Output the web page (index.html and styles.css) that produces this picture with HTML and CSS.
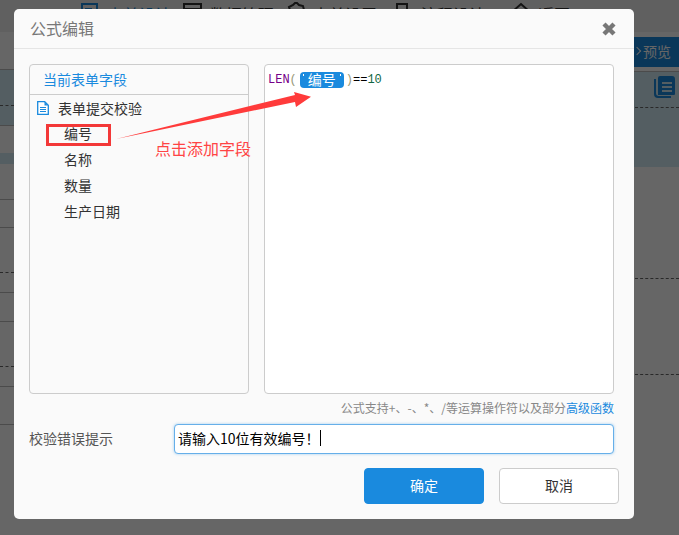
FILE: index.html
```html
<!DOCTYPE html>
<html lang="zh-CN">

<head>
    <meta charset="UTF-8" />
    <title>公式编辑</title>
    <link rel="stylesheet" href="styles.css">
</head>

<body>
    <div class="page">
        <div class="nav">
            <div class="nav-item nav-active">
                <svg width="20" height="20" viewBox="0 0 20 20"><path d="M17 8V2H2v15h7M5 7h7M5 11h4M11 14l6-7 2 2-6 7h-2z" /></svg>
                <span>表单设计</span>
            </div>
            <div class="nav-item nav-w2">
                <svg width="20" height="20" viewBox="0 0 20 20"><path d="M1 2h17v16H1zM1 7h17" /></svg>
                <span>数据管理</span>
            </div>
            <div class="nav-item nav-w3">
                <svg width="20" height="20" viewBox="0 0 20 20"><path d="M7 3l2-2h2l2 2 4 1 1 4-1 3 1 3-4 2-3 2-3-2-4-1-1-4 1-3-1-3z" /></svg>
                <span>表单设置</span>
            </div>
            <div class="nav-item nav-w4">
                <svg width="20" height="20" viewBox="0 0 20 20"><path d="M3 2h10v8H3zM1 18h14" /></svg>
                <span>流程设计</span>
            </div>
            <div class="nav-item">
                <svg width="20" height="20" viewBox="0 0 20 20"><path d="M1 10l9-8 9 8M4 9v9h12V9" /></svg>
                <span>返回</span>
            </div>
        </div>

        <div class="backdrop">
            <div class="side-left">
                <div class="row h38 line"></div>
                <div class="row h36 band dash"></div>
                <div class="row h20 band line"></div>
                <div class="row h27"></div>
                <div class="row h11 band"></div>
                <div class="row h36 line"></div>
                <div class="row h28 line"></div>
                <div class="row h45 dash"></div>
                <div class="row h20 line"></div>
                <div class="row h29 line"></div>
                <div class="row h45 dash"></div>
                <div class="row h20 line"></div>
                <div class="row h38 line"></div>
            </div>
            <div class="side-right">
                <div class="preview-bar">
                    <span class="preview-eye"></span>
                    <span>预览</span>
                </div>
                <div class="form-band">
                    <svg class="copy-icon" width="22" height="24" viewBox="0 0 22 24">
                        <path d="M1 4v15a4 4 0 0 0 4 4h13v-2H6a3 3 0 0 1-3-3V4z" />
                        <path fill-rule="evenodd" d="M7 1h12a3 3 0 0 1 3 3v15a1 1 0 0 1-1 1H5V3a2 2 0 0 1 2-2zm2 6v2h10V7zm0 4v2h10v-2zm0 4v2h10v-2z" />
                    </svg>
                </div>
                <div class="dash-row first"></div>
                <div class="dash-row"></div>
            </div>
        </div>
    </div>

    <div class="mask"></div>

    <div class="dialog">
        <div class="dialog-head">
            <span>公式编辑</span>
            <svg class="close-icon" width="14" height="14" viewBox="0 0 14 14"><path d="M2 2l10 10M12 2L2 12" /></svg>
        </div>
        <div class="dialog-body">
            <div class="panels">
                <div class="field-panel">
                    <div class="field-title">当前表单字段</div>
                    <div class="field-root">
                        <svg width="12" height="14" viewBox="0 0 12 14">
                            <path class="doc-line" d="M.7.7h7l3.6 3.6v9H.7z" />
                            <path class="doc-fill" d="M7.5 1v3.5H11zM3 6h6v1H3zM3 8h6v1H3zM3 10h6v1H3z" />
                        </svg>
                        <span>表单提交校验</span>
                    </div>
                    <div class="field-item">编号</div>
                    <div class="field-item">名称</div>
                    <div class="field-item">数量</div>
                    <div class="field-item">生产日期</div>
                </div>
                <div class="formula-panel">
                    <span class="cm-fn">LEN</span><span class="cm-paren cm-left">(</span><span class="chip">编号</span><span class="cm-paren cm-right">)</span><span class="cm-op">==</span><span class="cm-num">10</span>
                </div>
            </div>
            <div class="hint">公式支持+、-、*、/等运算操作符以及部分<span class="hint-link">高级函数</span></div>
            <div class="tip-row">
                <div class="tip-label">校验错误提示</div>
                <div class="tip-input">请输入10位有效编号！<span class="caret"></span></div>
            </div>
            <div class="actions">
                <button class="btn btn-primary">确定</button>
                <button class="btn">取消</button>
            </div>
        </div>
    </div>

    <!-- annotations drawn on top of the screenshot -->
    <div class="mark-box"></div>
    <div class="mark-text">点击添加字段</div>
    <svg class="mark-arrow" width="679" height="535" viewBox="0 0 679 535">
        <path d="M116 139L295 95 294 92 311 96.7 296 107 295 102z" />
    </svg>
</body>

</html>
```

FILE: styles.css
```css
* {
    box-sizing: border-box;
}

html,
body {
    margin: 0;
    height: 535px;
    overflow: hidden;
}

body {
    font-family: "Noto Sans CJK SC", "Liberation Sans", sans-serif;
    font-size: 14px;
    color: #333;
    background: #fff;
}

/* page behind the dialog */
.page {
    height: 535px;
}

.nav {
    display: flex;
    height: 32px;
    padding-left: 80px;
    background: #f0f0f0;
    color: #333;
}

.nav-item {
    display: flex;
    gap: 7px;
    width: 103px;
    padding-top: 2px;
    font-size: 16px;
    line-height: 24px;
}

.nav-w3 {
    width: 108px;
}

.nav-w4 {
    width: 117px;
}

.nav-item svg {
    flex: none;
    fill: none;
    stroke: currentColor;
    stroke-width: 2;
}

.nav-active {
    color: #1a8ade;
}

.backdrop {
    display: flex;
    justify-content: space-between;
}

.side-left {
    width: 14px;
}

.side-right {
    width: 45px;
    padding-top: 5px;
}

.row {
    border-bottom: 1px solid transparent;
}

.h11 { height: 11px; }
.h20 { height: 20px; }
.h27 { height: 27px; }
.h28 { height: 28px; }
.h29 { height: 29px; }
.h36 { height: 36px; }
.h38 { height: 38px; }
.h45 { height: 45px; }

.band {
    background: #d3ecf6;
}

.line {
    border-bottom-color: #bbb;
}

.dash {
    border-bottom: 1px dashed #666;
}

.preview-bar {
    display: flex;
    align-items: center;
    gap: 3px;
    height: 30px;
    padding: 0 0 2px 0;
    background: #1a8ade;
    color: #fff;
}

.preview-eye {
    width: 6px;
    height: 6px;
    border: solid #fff;
    border-width: 1px 1px 0 0;
    transform: rotate(45deg);
}

.form-band {
    height: 96px;
    margin-top: 4px;
    padding: 3px 0 0 19px;
    border-top: 1px solid #bbb;
    background: #d3ecf6;
    position: relative;
}

.form-band::after {
    content: "";
    position: absolute;
    left: 1px;
    right: 0;
    top: 35px;
    border-top: 1px dashed #666;
}

.copy-icon {
    display: block;
    fill: #1a8ade;
}

.dash-row {
    height: 96px;
    margin-left: 1px;
    border-bottom: 1px dashed #666;
}

.dash-row.first {
    height: 112px;
}

.mask {
    position: absolute;
    inset: 0;
    background: rgba(0, 0, 0, 0.6);
}

/* dialog */
.dialog {
    position: absolute;
    left: 14px;
    top: 9px;
    width: 620px;
    height: 510px;
    border-radius: 5px;
    background: #fafafa;
}

.dialog-head {
    display: flex;
    justify-content: space-between;
    align-items: center;
    height: 40px;
    padding: 0 18px 2px 16px;
    border-bottom: 1px solid #e5e5e5;
    font-size: 16px;
    color: #777;
}

.close-icon {
    margin-top: 3px;
    fill: none;
    stroke: #777;
    stroke-width: 4.4;
}

.dialog-body {
    padding: 15px 15px 0;
}

.panels {
    display: flex;
    gap: 15px;
    width: 585px;
    height: 330px;
}

.field-panel {
    width: 220px;
    border: 1px solid #ccc;
    border-radius: 4px;
}

.field-title {
    height: 30px;
    padding-left: 13px;
    border-bottom: 1px solid #ccc;
    color: #1a8ade;
    line-height: 29px;
}

.field-root {
    display: flex;
    align-items: center;
    gap: 9px;
    height: 25px;
    padding-left: 7px;
}

.doc-line {
    fill: #fff;
    stroke: #1a8ade;
    stroke-width: 1.3;
}

.doc-fill {
    fill: #1a8ade;
}

.field-item {
    height: 26px;
    padding-left: 34px;
    line-height: 26px;
}

.formula-panel {
    flex: 1;
    padding: 5px 3px;
    border: 1px solid #ccc;
    border-radius: 4px;
    background: #fff;
    font-family: "Liberation Mono", monospace;
    font-size: 12px;
    line-height: 20px;
    color: #000;
}

.cm-fn {
    color: #708;
}

.cm-paren {
    color: #997;
}

.cm-left {
    margin-right: 3px;
}

.cm-right {
    margin-left: 2px;
}

.cm-num {
    color: #164;
}

.chip {
    display: inline-block;
    position: relative;
    width: 44px;
    height: 16px;
    border-radius: 4px;
    background: #1a8ade;
    color: #fff;
    font-family: "Noto Sans CJK SC", sans-serif;
    font-size: 14px;
    line-height: 15px;
    text-align: center;
    vertical-align: -2px;
}

.chip::before,
.chip::after {
    content: "";
    position: absolute;
    top: 2px;
    width: 1px;
    height: 2px;
    background: #fff;
}

.chip::before {
    left: 3px;
}

.chip::after {
    right: 3px;
}

.hint {
    width: 585px;
    height: 30px;
    font-size: 12px;
    line-height: 28px;
    color: #888;
    text-align: right;
}

.hint-link {
    color: #1a8ade;
}

.tip-row {
    display: flex;
    align-items: center;
}

.tip-label {
    width: 145px;
    padding-bottom: 2px;
    color: #555;
}

.tip-input {
    display: flex;
    align-items: center;
    width: 440px;
    height: 30px;
    padding: 0 0 2px 3px;
    border: 1px solid #66afe9;
    border-radius: 4px;
    background: #fff;
    box-shadow: 0 0 3px rgba(102, 175, 233, 0.6);
    color: #000;
}

.caret {
    width: 1px;
    height: 16px;
    background: #000;
}

.actions {
    display: flex;
    justify-content: flex-end;
    gap: 15px;
    margin-top: 14px;
    width: 590px;
}

.btn {
    width: 120px;
    height: 36px;
    padding: 0 0 2px;
    border: 1px solid #ccc;
    border-radius: 4px;
    background: #fff;
    color: #333;
    font: inherit;
}

.btn-primary {
    border-color: #1a8ade;
    background: #1a8ade;
    color: #fff;
}

/* red annotations */
.mark-box {
    position: absolute;
    left: 46px;
    top: 124px;
    width: 65px;
    height: 22px;
    border: 3px solid #f33838;
}

.mark-text {
    position: absolute;
    left: 155px;
    top: 137px;
    font-size: 16px;
    line-height: 22px;
    color: #f44;
}

.mark-arrow {
    position: absolute;
    left: 0;
    top: 0;
    fill: #ff3b3b;
}
```
